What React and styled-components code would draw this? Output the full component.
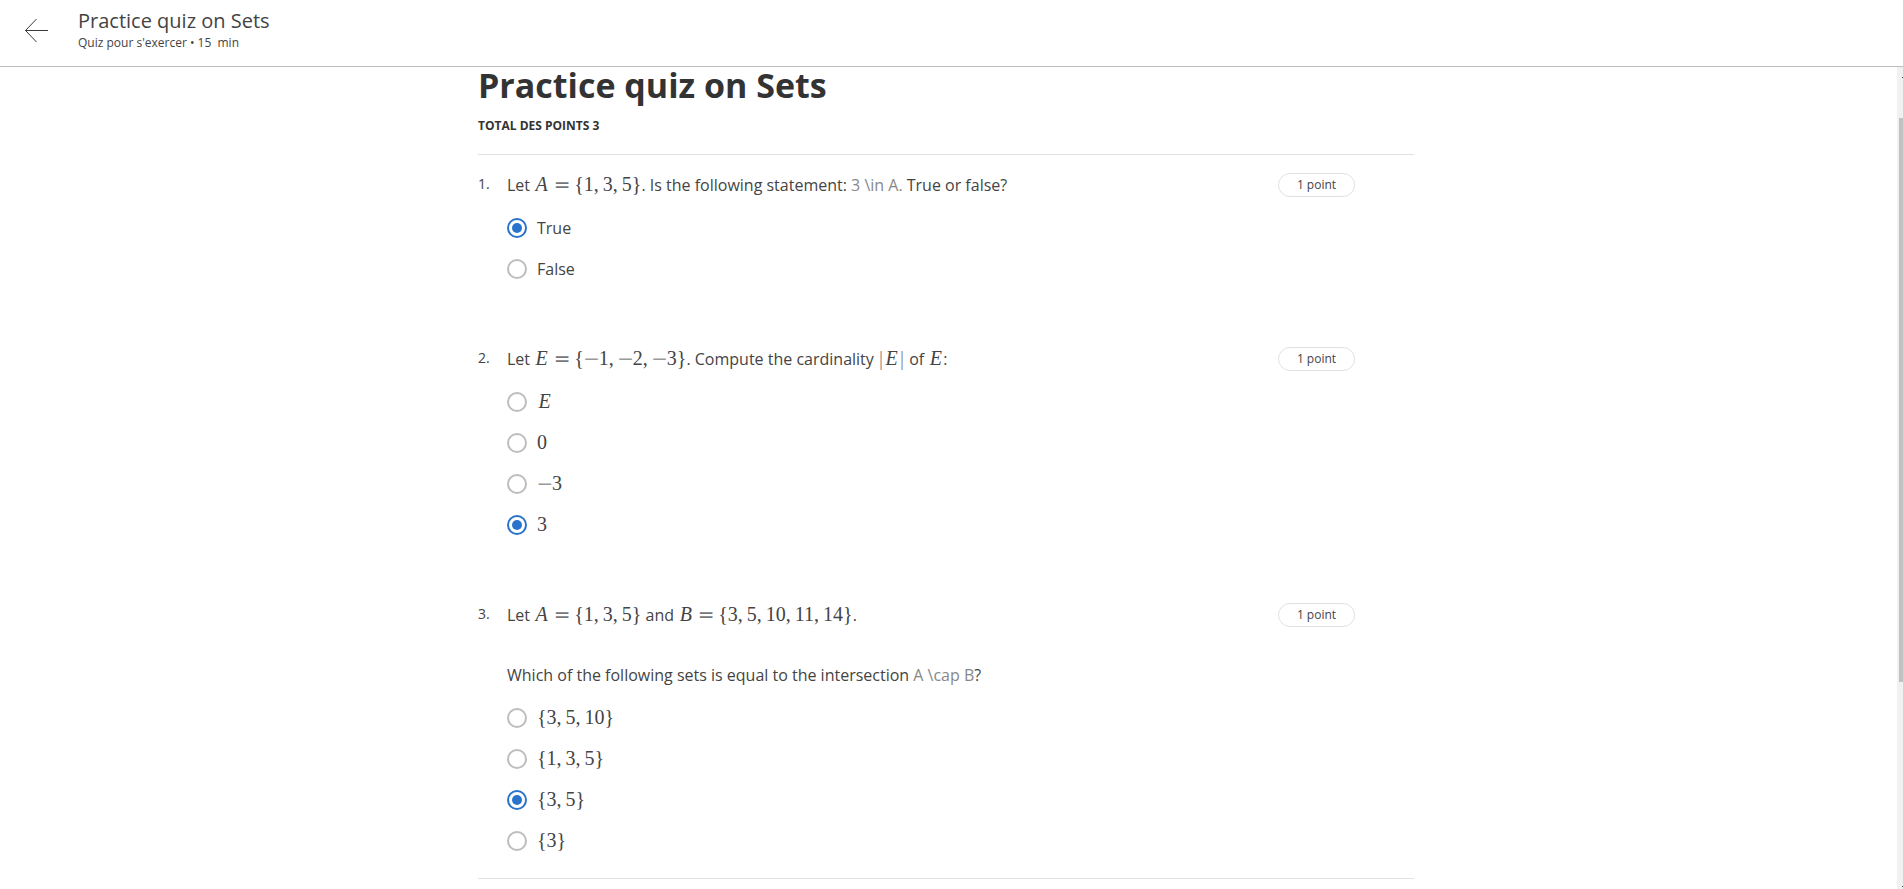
import React from "react";
import styled, { createGlobalStyle } from "styled-components";

const GlobalStyle = createGlobalStyle`
  *, *::before, *::after { box-sizing: border-box; }
  body {
    margin: 0;
    background: #fff;
    color: #444;
    font-family: "Open Sans", "Noto Sans", sans-serif;
    font-size: 16px;
    line-height: 24px;
  }
`;

const Page = styled.div`
  display: flex;
  flex-direction: column;
  min-height: 100vh;
`;

const Header = styled.header`
  display: flex;
  align-items: center;
  min-height: 67px;
  padding: 0 24px 4px;
  border-bottom: 1px solid #bdbdbd;
`;

const BackButton = styled.button`
  display: flex;
  width: 24px;
  height: 24px;
  margin-right: 30px;
  padding: 0;
  border: 0;
  background: none;
  color: #373a3c;
  cursor: pointer;
`;

const HeaderTitle = styled.div`
  font-size: 20px;
  line-height: 24px;
`;

const HeaderMeta = styled.div`
  font-size: 12px;
  line-height: 20px;
  white-space: pre;
`;

const Body = styled.div`
  display: flex;
  flex: 1;
`;

const Main = styled.main`
  flex: 1;
  padding-right: 5px;
`;

const Column = styled.div`
  max-width: 936px;
  margin: 0 auto;
`;

const Title = styled.h1`
  margin: 0 0 14px;
  color: #333;
  font-size: 34px;
  font-weight: 700;
  line-height: 36px;
`;

const Total = styled.p`
  margin: 0;
  padding-bottom: 19px;
  color: #333;
  font-size: 12px;
  font-weight: 700;
  line-height: 18px;
  text-transform: uppercase;
`;

const Questions = styled.div`
  display: flex;
  flex-direction: column;
  gap: 58px;
  padding: 18px 0 17px;
  border: solid #e1e1e1;
  border-width: 1px 0;
`;

const QuestionRow = styled.section`
  display: flex;
  align-items: flex-start;
  padding-right: 59px;
`;

const Number = styled.div`
  width: 29px;
  font-size: 14px;
  line-height: 22px;
`;

const QuestionBody = styled.div`
  flex: 1;
`;

const Prompt = styled.div`
  display: flex;
  flex-direction: column;
  gap: 36px;
  margin-bottom: 10px;
`;

const Paragraph = styled.p`
  margin: 0;
`;

const Points = styled.div`
  width: 77px;
  border: 1px solid #e1e1e1;
  border-radius: 12px;
  font-size: 12px;
  line-height: 22px;
  text-align: center;
`;

const Option = styled.label`
  display: flex;
  align-items: center;
  gap: 10px;
  min-height: 41px;
  cursor: pointer;
`;

const Radio = styled.input`
  display: grid;
  place-items: center;
  width: 20px;
  height: 20px;
  margin: 0;
  appearance: none;
  border: 2px solid #bdbdbd;
  border-radius: 50%;

  &:checked { border-color: #2a73cc; }
  &:checked::before {
    content: "";
    width: 10px;
    height: 10px;
    border-radius: 50%;
    background: #2a73cc;
  }
`;

const RawTex = styled.span`
  color: #888;
`;

const MathText = styled.span`
  font-family: "Liberation Serif", serif;
  font-size: 20px;
  line-height: 1;
  white-space: nowrap;
`;

const Variable = styled.i`
  display: inline-block;
  width: 15px;
  text-align: center;
`;

const Operator = styled.span`
  display: inline-block;
  width: 15px;
  margin: 0 ${(p) => (p.$relation ? 5 : 0)}px;
  color: ${(p) => (p.$relation ? "#777" : "#999")};
  font-family: "DejaVu Math TeX Gyre", "Liberation Serif", serif;
  text-align: center;
  line-height: 1;
`;

const Comma = styled.span`
  padding-right: 4px;
`;

const Bar = styled.span`
  display: inline-block;
  width: 6px;
  color: #888;
  text-align: center;
`;

const ScrollTrack = styled.div`
  display: flex;
  flex-direction: column;
  align-items: flex-end;
  width: 6px;
  background: #f1f1f1;
`;

const ScrollSpace = styled.div`
  flex: ${(p) => p.$share};
`;

const ScrollArrowTip = styled.div`
  width: 1px;
  height: 1px;
  margin: ${(p) => (p.$end ? "0 0 2px" : "10px 0 0")};
  background: #505050;
`;

const ScrollThumb = styled.div`
  flex: 564;
  width: 4px;
  background: #c1c1c1;
`;

function Tex({ children }) {
  return (
    <MathText>
      {[...children].map((ch, i) => {
        if (/[A-Z]/.test(ch)) return <Variable key={i}>{ch}</Variable>;
        if (ch === "=") return <Operator key={i} $relation>=</Operator>;
        if (ch === "−") return <Operator key={i}>−</Operator>;
        if (ch === ",") return <Comma key={i}>,</Comma>;
        if (ch === "|") return <Bar key={i}>|</Bar>;
        return ch;
      })}
    </MathText>
  );
}

const questions = [
  {
    prompt: [
      <>Let <Tex>{"A={1,3,5}"}</Tex>. Is the following statement: <RawTex>3 \in A.</RawTex> True or false?</>,
    ],
    options: ["True", "False"],
    chosen: 0,
  },
  {
    prompt: [
      <>Let <Tex>{"E={−1,−2,−3}"}</Tex>. Compute the cardinality <Tex>{"|E|"}</Tex> of <Tex>{"E"}</Tex>:</>,
    ],
    options: [<Tex>{"E"}</Tex>, <Tex>{"0"}</Tex>, <Tex>{"−3"}</Tex>, <Tex>{"3"}</Tex>],
    chosen: 3,
  },
  {
    prompt: [
      <>Let <Tex>{"A={1,3,5}"}</Tex> and <Tex>{"B={3,5,10,11,14}"}</Tex>.</>,
      <>Which of the following sets is equal to the intersection <RawTex>A \cap B</RawTex>?</>,
    ],
    options: [
      <Tex>{"{3,5,10}"}</Tex>,
      <Tex>{"{1,3,5}"}</Tex>,
      <Tex>{"{3,5}"}</Tex>,
      <Tex>{"{3}"}</Tex>,
    ],
    chosen: 2,
  },
];

function Question({ index, prompt, options, chosen }) {
  const name = `question-${index}`;
  return (
    <QuestionRow>
      <Number>{index}.</Number>
      <QuestionBody role="radiogroup" aria-labelledby={name}>
        <Prompt id={name}>
          {prompt.map((text, i) => <Paragraph key={i}>{text}</Paragraph>)}
        </Prompt>
        {options.map((option, i) => (
          <Option key={i} htmlFor={`${name}-${i}`}>
            <Radio type="radio" id={`${name}-${i}`} name={name} defaultChecked={i === chosen} />
            <span>{option}</span>
          </Option>
        ))}
      </QuestionBody>
      <Points>1 point</Points>
    </QuestionRow>
  );
}

export default function App() {
  return (
    <Page>
      <GlobalStyle />
      <Header>
        <BackButton type="button" aria-label="Retour">
          <svg width="24" height="24" viewBox="0 0 24 24" fill="none" stroke="currentColor" strokeWidth="1">
            <path d="M24 11.5H1.5M12.5 0L1.5 11.5L12.5 23" />
          </svg>
        </BackButton>
        <div>
          <HeaderTitle>Practice quiz on Sets</HeaderTitle>
          <HeaderMeta>{"Quiz pour s'exercer • 15  min"}</HeaderMeta>
        </div>
      </Header>
      <Body>
        <Main>
          <Column>
            <Title>Practice quiz on Sets</Title>
            <Total>Total des points 3</Total>
            <Questions>
              {questions.map((q, i) => <Question key={i} index={i + 1} {...q} />)}
            </Questions>
          </Column>
        </Main>
        <ScrollTrack aria-hidden="true">
          <ScrollArrowTip />
          <ScrollSpace $share={40} />
          <ScrollThumb />
          <ScrollSpace $share={204} />
          <ScrollArrowTip $end />
        </ScrollTrack>
      </Body>
    </Page>
  );
}
